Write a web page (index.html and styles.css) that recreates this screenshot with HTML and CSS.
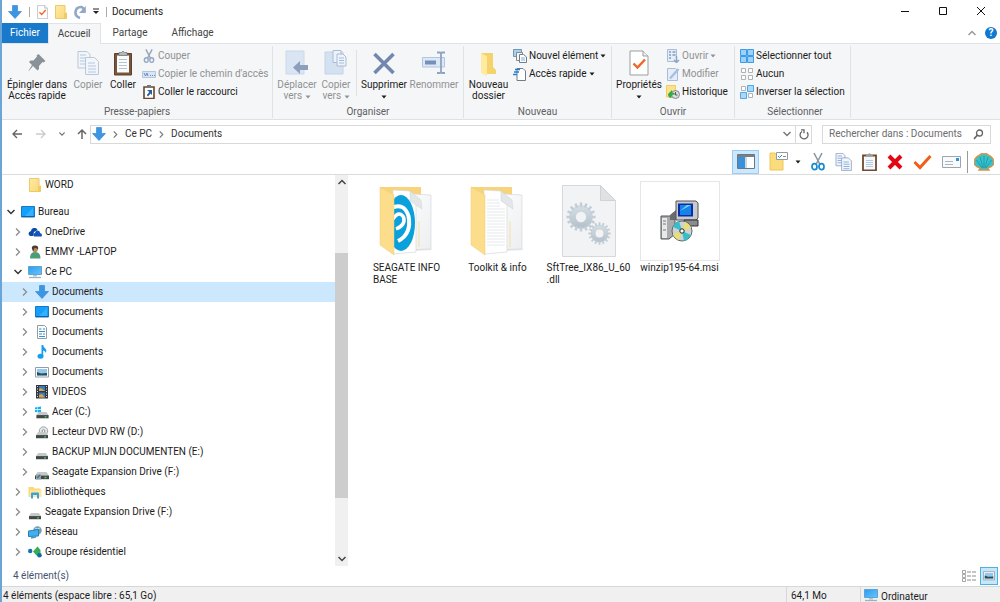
FILE: index.html
```html
<!DOCTYPE html>
<html lang="fr">
<head>
    <meta charset="utf-8">
    <title>Documents</title>
    <link rel="stylesheet" href="styles.css">
</head>
<body>
    <svg class="sprite" aria-hidden="true">
        <defs>
            <linearGradient id="screenFill" x1="0" y1="0" x2="1" y2="1"><stop offset="0" stop-color="#2b9df0"/><stop offset="1" stop-color="#69c4fb"/></linearGradient>
            <linearGradient id="folderFill" x1="0" y1="0" x2="1" y2="1"><stop offset="0" stop-color="#ffe9a6"/><stop offset="1" stop-color="#f8d775"/></linearGradient>
            <linearGradient id="pageFill" x1="0" y1="0" x2="1" y2="1"><stop offset="0" stop-color="#ffffff"/><stop offset="1" stop-color="#eceef0"/></linearGradient>
            <linearGradient id="gearFill" x1="0" y1="0" x2="0" y2="1"><stop offset="0" stop-color="#d0dae1"/><stop offset="1" stop-color="#b8c4cd"/></linearGradient>
        </defs>
        <symbol id="arrow-down" viewBox="0 0 14 14"><path d="M4.500 .5h5v6h4L7 13.500.5 6.500h4z" fill="#3b96e4" stroke="#2b80cc" stroke-width=".6"/></symbol>
        <symbol id="chev-right" viewBox="0 0 8 8"><path d="M2 0.500L5.500 4 2 7.500" fill="none" stroke="currentColor" stroke-width="1.300"/></symbol>
        <symbol id="chev-down" viewBox="0 0 8 8"><path d="M.5 2L4 5.500 7.500 2" fill="none" stroke="currentColor" stroke-width="1.500"/></symbol>
        <symbol id="chev-up" viewBox="0 0 8 8"><path d="M.5 6L4 2.500 7.500 6" fill="none" stroke="currentColor" stroke-width="1.500"/></symbol>
        <symbol id="caret" viewBox="0 0 6 4"><path d="M.5 .5h5L3 3.500z" fill="currentColor"/></symbol>
        <symbol id="folder" viewBox="0 0 12 14"><path d="M.5 .5h9.500v8l1.500-.5v5.500H.5z" fill="url(#folderFill)" stroke="#edca63"/><path d="M10 8.500v4.500" stroke="#e8bd45"/></symbol>
        <symbol id="desktop" viewBox="0 0 14 12"><path d="M.5.5h13v10.500H.5z" fill="#12a0fb" stroke="#1878c4"/><path d="M4 10L12 2v8z" fill="#35b1ff"/><path d="M1 10.500h12" stroke="#155f9d"/></symbol>
        <symbol id="computer" viewBox="0 0 14 13"><path d="M.5.5h13v8H.5z" fill="url(#screenFill)" stroke="#5da4d2"/><path d="M5 9h4v1.500H5z" fill="#aac6d8"/><path d="M1 11.500h12" stroke="#9fb1bd" stroke-width="1.300"/></symbol>
        <symbol id="clipboard" viewBox="0 0 18 25"><path d="M.5 3h17v21.500H.5z" fill="#7b5539" stroke="#5e4230"/><path d="M3 5h12v17H3z" fill="#f9fbfc"/><path d="M5 9h8M5 12h8M5 15h8M5 18h8" stroke="#b5c6d2"/><path d="M5 5V2h2.500Q9-.8 10.500 2H13v3z" fill="#b5b8ba" stroke="#777" stroke-width=".7"/></symbol>
        <symbol id="pages" viewBox="0 0 22 24"><g fill="#f3f7fc" stroke="#8099bd"><path d="M1 .5h9l3 3V17H1z"/><path d="M8.500 6.500h9l4 4v13h-13z"/></g><path d="M3 4h6M3 7h5M3 10h5M3 13h5M11 12h7M11 15h8M11 18h8M11 21h8" stroke="#6f9bd3"/></symbol>
        <symbol id="scissors" viewBox="0 0 14 18"><path d="M3 .5l6 11.500M11 .5L5 12" stroke="#8d969e" stroke-width="1.600"/><ellipse cx="3.500" cy="14.200" rx="2.500" ry="3" fill="none" stroke="#168bd2" stroke-width="1.700"/><ellipse cx="10.500" cy="14.200" rx="2.500" ry="3" fill="none" stroke="#168bd2" stroke-width="1.700"/></symbol>
        <symbol id="scissors-gray" viewBox="0 0 14 18"><path d="M3 .5l6 11.500M11 .5L5 12" stroke="#9aa5b5" stroke-width="1.800"/><ellipse cx="3.500" cy="14.200" rx="2.500" ry="3" fill="none" stroke="#94a8c6" stroke-width="1.800"/><ellipse cx="10.500" cy="14.200" rx="2.500" ry="3" fill="none" stroke="#94a8c6" stroke-width="1.800"/></symbol>
        <symbol id="drive" viewBox="0 0 14 8"><path d="M2.500 0h9L14 3.500H0z" fill="#c6c9cb"/><path d="M0 3.500h14v3.700H0z" fill="#444748"/><path d="M9.500 5.500h2" stroke="#43d851" stroke-width="1.500"/></symbol>
        <symbol id="picture" viewBox="0 0 14 11"><path d="M.5.5h13v9.500H.5z" fill="#fff" stroke="#929da6"/><path d="M2 2h10v6.500H2z" fill="#93c9ec"/><path d="M2 8.500V5l4 1.500L12 6v2.500z" fill="#274e61"/></symbol>
        <symbol id="check-page" viewBox="0 0 20 25"><path d="M1 .5h13l5 5v19H1z" fill="#fff" stroke="#9b9d9f"/><path d="M14 .5v5h5" fill="#eceeef" stroke="#9b9d9f"/><path d="M4.500 13l4 4L16 9" fill="none" stroke="#f26522" stroke-width="2.400"/></symbol>
        <symbol id="gear" viewBox="-16 -16 32 32"><circle r="9" fill="none" stroke="url(#gearFill)" stroke-width="7"/><path d="M0-11V-15.500M0 11V15.500M-11 0H-15.500M11 0H15.500M-7.800-7.800L-11-11M7.800 7.800L11 11M-7.800 7.800L-11 11M7.800-7.800L11-11M4.200-10.200L5.900-14.300M-4.200 10.200L-5.900 14.300M-4.200-10.200L-5.900-14.300M4.200 10.200L5.900 14.300M10.200-4.200L14.300-5.900M-10.200 4.200L-14.300 5.900M10.200 4.200L14.300 5.900M-10.200-4.200L-14.300-5.900" stroke="#c2cdd5" stroke-width="2.600"/></symbol>
        <symbol id="open-folder" viewBox="0 0 56 70"><path d="M10 66l44-2-8-3-20 2z" fill="#e6e7e8"/><path d="M1 1h41v60L15 66z" fill="#f7d479"/><path d="M18 7l34 2v54l-30 1z" fill="url(#pageFill)" stroke="#d5d8da" stroke-width=".7"/><path d="M40 35v26" stroke="#f5dfa0"/><path d="M14 4l17 1 6 10v51l-23 2z" fill="#fff" stroke="#d5d8da" stroke-width=".7"/><path d="M31 5v10l12 8-1-9z" fill="#e4e7e9" stroke="#d0d3d5" stroke-width=".5"/></symbol>
    </svg>

    <header class="titlebar">
        <div class="quick-access">
            <svg width="14" height="14"><use href="#arrow-down"/></svg>
            <span class="sep"></span>
            <button aria-label="Propriétés"><svg width="11" height="14"><use href="#check-page"/></svg></button>
            <button aria-label="Nouveau dossier"><svg width="12" height="14"><use href="#folder"/></svg></button>
            <button aria-label="Rétablir"><svg width="12" height="14" viewBox="0 0 12 14"><path d="M6 13Q1 11.500 1.500 7 2 2 7 2q2 0 2.500 2.500" fill="none" stroke="#93a8c5" stroke-width="2.600"/><path d="M11.800 1v7H5z" fill="#93a8c5"/></svg></button>
            <button aria-label="Personnaliser"><svg width="6" height="7" viewBox="0 0 6 7"><path d="M0 1h6" stroke="#222"/><path d="M0 3h6L3 6z" fill="#222"/></svg></button>
            <span class="sep"></span>
            <h1>Documents</h1>
        </div>
        <div class="window-buttons">
            <button aria-label="Réduire"><svg width="10" height="10"><path d="M1 5.500h8" stroke="#111"/></svg></button>
            <button aria-label="Agrandir"><svg width="10" height="10"><path d="M1.500 1.500h7v7h-7z" fill="none" stroke="#111"/></svg></button>
            <button aria-label="Fermer"><svg width="10" height="10"><path d="M1 1l8 8M9 1L1 9" stroke="#111"/></svg></button>
        </div>
    </header>

    <nav class="tabs">
        <button class="tab tab-file">Fichier</button>
        <button class="tab tab-active">Accueil</button>
        <button class="tab">Partage</button>
        <button class="tab">Affichage</button>
        <div class="tabs-end">
            <button aria-label="Réduire le ruban"><svg width="8" height="8" class="faint"><use href="#chev-up"/></svg></button>
            <button class="help" aria-label="Aide">?</button>
        </div>
    </nav>

    <section class="ribbon">
        <div class="group g-clip">
            <div class="tools">
                <button class="big w-pin"><svg width="18" height="26" viewBox="0 0 18 26"><path d="M10.500 4l7 7-2 1.500-1-.5-3.500 4v3l-1.500 1.500L5 16 .8 21l-.3-.3L4 15 1 12l1.500-1.500h3l3.500-4-.5-1z" fill="#8a9299"/></svg><span>Épingler dans<br>Accès rapide</span></button>
                <button class="big w-copy" disabled><svg width="22" height="26" class="pale"><use href="#pages"/></svg><span>Copier</span></button>
                <button class="big w-paste"><svg width="18" height="26"><use href="#clipboard"/></svg><span>Coller</span></button>
                <div class="small-tools">
                    <button disabled><svg width="14" height="14"><use href="#scissors-gray"/></svg>Couper</button>
                    <button disabled><svg width="14" height="14" viewBox="0 0 14 14"><path d="M.5 4.500h13v6H.5z" fill="#d9e5f4" stroke="#b3c5df"/><path d="M2 6l1.500 3L5 6l1 3M8 8.500h1M10 8.500h1M12 8.500h1" fill="none" stroke="#6e8cb5"/></svg>Copier le chemin d'accès</button>
                    <button><svg width="14" height="14" viewBox="0 0 14 14"><path d="M2 2h10v11.500H2z" fill="#fff" stroke="#68482f" stroke-width="1.600"/><path d="M5 0h4v3H5z" fill="#777"/><path d="M5 5h5v5L8.500 8.500 6 11.500 4.800 10l2.500-3z" fill="#275fa5"/></svg>Coller le raccourci</button>
                </div>
            </div>
            <h2>Presse-papiers</h2>
        </div>
        <div class="group g-org">
            <div class="tools">
                <button class="big w-org" disabled><svg width="24" height="26" viewBox="0 0 24 26"><path d="M1 1h18v23H1z" fill="#d9e5f3" stroke="#cad8ea"/><path d="M15 11v4h8v5h-8v4l-7-6.500z" fill="#8d9fbd"/></svg><span>Déplacer<br>vers <svg width="6" height="4"><use href="#caret"/></svg></span></button>
                <button class="big w-org2" disabled><svg width="24" height="26" viewBox="0 0 24 26"><path d="M1 2h18v22H1z" fill="#d4e1f1" stroke="#c3d3e8"/><g fill="#edf3fa" stroke="#a9bcd7"><path d="M9 .5h8v12H9z"/><path d="M13 4h6l3 3v9h-9z"/></g><path d="M15 8h5M15 10.500h5M15 13h5" stroke="#a9bcd7"/></svg><span>Copier<br>vers <svg width="6" height="4"><use href="#caret"/></svg></span></button>
                <span class="tool-sep"></span>
                <button class="big w-del"><svg width="22" height="26" viewBox="0 0 22 26"><path d="M1.500 4l19 19M20.500 4l-19 19" stroke="#7287ad" stroke-width="3.600"/></svg><span>Supprimer<br><svg width="6" height="4"><use href="#caret"/></svg></span></button>
                <button class="big w-ren" disabled><svg width="24" height="26" viewBox="0 0 24 26"><path d="M.5 7.500h22v9.500H.5z" fill="#dce8f6" stroke="#b1c5e0"/><path d="M3 10.500h11v4H3z" fill="#7590b9"/><path d="M15 2.500h3l1 1 1-1h3M15 23h3l1-1 1 1h3M19 3v19" fill="none" stroke="#8fa3c2" stroke-width="1.800"/></svg><span>Renommer</span></button>
            </div>
            <h2>Organiser</h2>
        </div>
        <div class="group g-new">
            <div class="tools">
                <button class="big w-new"><svg width="18" height="26" viewBox="0 0 18 26"><path d="M1 3h12v14l3 3v4H3z" fill="#f5d36c"/><path d="M1 3l6 3.500V26L1 23z" fill="#ffeaa0"/></svg><span>Nouveau<br>dossier</span></button>
                <div class="small-tools">
                    <button><svg width="14" height="14" viewBox="0 0 14 14"><path d="M.5.5h8v7h-8z" fill="#a5d2f2" stroke="#7895ac"/><path d="M3.500 3.500h6v8h-6z" fill="#f3f5f6" stroke="#888"/><path d="M6.500 5.500h4l3 2.500v5.500h-7z" fill="#fff" stroke="#737d85"/><path d="M8 9h4M8 11h4" stroke="#78aee1"/></svg>Nouvel élément <svg width="6" height="4"><use href="#caret"/></svg></button>
                    <button><svg width="14" height="14" viewBox="0 0 14 14"><path d="M4 1.500h6l2.500 2.500v9.500H4z" fill="#fff" stroke="#737d85"/><path d="M2 2.500h5M1 5h5M0 7.500h4" stroke="#2680ce" stroke-width="1.300"/></svg>Accès rapide <svg width="6" height="4"><use href="#caret"/></svg></button>
                </div>
            </div>
            <h2>Nouveau</h2>
        </div>
        <div class="group g-open">
            <div class="tools">
                <button class="big w-prop"><svg width="20" height="26"><use href="#check-page"/></svg><span>Propriétés<br><svg width="6" height="4"><use href="#caret"/></svg></span></button>
                <div class="small-tools">
                    <button disabled><svg width="14" height="14" viewBox="0 0 14 14"><path d="M1.500.5h9v12h-9z" fill="#e4edf8" stroke="#a9bdd8"/><path d="M3 3h2M3 6h2M3 9h2M6.500 3h3M6.500 6h3" stroke="#7f9dc6" stroke-width="1.500"/><path d="M10.500 7v6M8 11l2.500 2.500L13 11" fill="none" stroke="#8ba6ca" stroke-width="1.500"/></svg>Ouvrir <svg width="6" height="4"><use href="#caret"/></svg></button>
                    <button disabled><svg width="14" height="14" viewBox="0 0 14 14"><path d="M1.500 1.500h8l2 2v10h-10z" fill="#e4edf8" stroke="#a9bdd8"/><path d="M4 11.500L12.500 2" stroke="#a8c0e0" stroke-width="2.500"/></svg>Modifier</button>
                    <button><svg width="14" height="14" viewBox="0 0 14 14"><path d="M.5.5h9V12h-9z" fill="#fde28c" stroke="#efcc64"/><circle cx="9.500" cy="9.500" r="4" fill="#d9dedf" stroke="#82898c"/><path d="M9.500 7v3h2" fill="none" stroke="#555"/><path d="M2 9l4-4v2.500q3 0 3 2Q5 9 5.500 13 2 13 2 9z" fill="#35ab45"/></svg>Historique</button>
                </div>
            </div>
            <h2>Ouvrir</h2>
        </div>
        <div class="group g-select">
            <div class="tools">
                <div class="small-tools">
                    <button><svg width="14" height="14" viewBox="0 0 14 14"><path d="M.5.5h6v6h-6zM7.500 .5h6v6h-6zM.5 7.500h6v6h-6zM7.500 7.500h6v6h-6z" fill="#9bd1fa" stroke="#3c9be4"/></svg>Sélectionner tout</button>
                    <button><svg width="14" height="14" viewBox="0 0 14 14"><path d="M1.500 1.500h4v4h-4zM8.500 1.500h4v4h-4zM1.500 8.500h4v4h-4zM8.500 8.500h4v4h-4z" fill="#fff" stroke="#adb2b5"/></svg>Aucun</button>
                    <button><svg width="14" height="14" viewBox="0 0 14 14"><path d="M1.500 1.500h4v4h-4zM8.500 8.500h4v4h-4z" fill="#fff" stroke="#adb2b5"/><path d="M7.500 .5h6v6h-6zM.5 7.500h6v6h-6z" fill="#a9d8fb" stroke="#55a7e4"/></svg>Inverser la sélection</button>
                </div>
            </div>
            <h2>Sélectionner</h2>
        </div>
    </section>

    <div class="address-row">
        <div class="nav-buttons">
            <button aria-label="Précédent"><svg width="12" height="12"><path d="M11 6H2M6 2L2 6l4 4" fill="none" stroke="#666" stroke-width="1.400"/></svg></button>
            <button aria-label="Suivant" disabled><svg width="12" height="12"><path d="M1 6h9M6 2l4 4-4 4" fill="none" stroke="#ccc" stroke-width="1.400"/></svg></button>
            <button aria-label="Emplacements récents"><svg width="6" height="6"><use href="#chev-down"/></svg></button>
            <button aria-label="Dossier parent"><svg width="10" height="12"><path d="M5 11V2M1 6l4-4 4 4" fill="none" stroke="#666" stroke-width="1.500"/></svg></button>
        </div>
        <div class="address">
            <svg width="14" height="14"><use href="#arrow-down"/></svg>
            <svg width="7" height="7"><use href="#chev-right"/></svg>
            <a href="#">Ce PC</a>
            <svg width="7" height="7"><use href="#chev-right"/></svg>
            <a href="#">Documents</a>
            <button class="history" aria-label="Historique"><svg width="8" height="8"><use href="#chev-down"/></svg></button>
            <button class="refresh" aria-label="Actualiser"><svg width="10" height="11" viewBox="0 0 10 11"><path d="M3 2.500a4 4 0 1 0 5 .7M2 .8h3v3.500" fill="none" stroke="#666" stroke-width="1.300"/></svg></button>
        </div>
        <form class="search">
            <input type="text" aria-label="Rechercher" placeholder="Rechercher dans : Documents">
            <svg width="11" height="11"><circle cx="6.500" cy="4" r="3" fill="none" stroke="#666" stroke-width="1.300"/><path d="M4.500 6L1 9.800" stroke="#666" stroke-width="1.700"/></svg>
        </form>
    </div>

    <div class="toolbar">
        <button class="pane-toggle" aria-label="Volet de navigation"><svg width="18" height="15" viewBox="0 0 18 15"><path d="M.5.5h17v14H.5z" fill="#fff" stroke="#6d777e"/><path d="M1 1h16v2H1z" fill="#788085"/><path d="M1 3h7v11H1z" fill="#3692dd"/><path d="M9 3v11" stroke="#a4adb3"/></svg></button>
        <button class="organize" aria-label="Organiser"><svg width="19" height="19" viewBox="0 0 19 19"><path d="M1 1h5l2 2h6v15H1z" fill="#fbdc7d" stroke="#edc65b"/><path d="M7.500.5h11v7h-11z" fill="#fff" stroke="#929ba1"/><path d="M9 4l1.500 1.500L13 3" fill="none" stroke="#2181ce"/><path d="M14 4.500h3" stroke="#888"/></svg><svg width="6" height="4"><use href="#caret"/></svg></button>
        <button aria-label="Couper"><svg width="14" height="19"><use href="#scissors"/></svg></button>
        <button aria-label="Copier"><svg width="17" height="18"><use href="#pages"/></svg></button>
        <button aria-label="Coller"><svg width="15" height="18" viewBox="0 0 15 18"><path d="M1 2.500h13v15H1z" fill="#fff" stroke="#70492f" stroke-width="1.800"/><path d="M2.500 4h10v12h-10z" fill="#f4f8fb"/><path d="M4 7.500h7M4 9.500h7M4 11.500h7M4 13.500h7" stroke="#b0cbe2"/><path d="M4 3.500V1.500h2Q7.500-1 9 1.500h2v2z" fill="#9b9da0"/></svg></button>
        <button aria-label="Supprimer"><svg width="16" height="16"><path d="M2 2l12 12M14 2L2 14" stroke="#e30613" stroke-width="4"/></svg></button>
        <button aria-label="Propriétés"><svg width="19" height="16"><path d="M1.500 8l5.500 5.500L17.500 2" fill="none" stroke="#f45d19" stroke-width="3"/></svg></button>
        <button aria-label="Envoyer"><svg width="19" height="12"><path d="M.5.5h18v11H.5z" fill="#f8fafb" stroke="#9da5aa"/><path d="M3 5.500h8M3 8.500h8" stroke="#aeb7bd"/><path d="M14 2h3v3h-3z" fill="#2793e1"/></svg></button>
        <span class="toolbar-sep"></span>
        <button class="shell" aria-label="Classic Shell"><svg width="20" height="18" viewBox="0 0 20 18"><path d="M6 15Q-2 13 1 6 3 3 5 2.500 7.500-.2 10 1q2.500-1.200 5 1.500 2 .5 4 3.500 3 7-5 9l1 2H5z" fill="#35c3cc" stroke="#e08f45" stroke-width="1.400"/><path d="M10 15V3M9 15L6 4M8 15L2.500 7M11 15l3-11M12 15l5.500-8" stroke="#1a93a5" stroke-width=".8" fill="none"/></svg></button>
    </div>

    <main class="content">
        <nav class="tree">
            <ul>
                <li class="lvl1 tree-first"><span class="twist"></span><span class="ico"><svg width="12" height="14"><use href="#folder"/></svg></span><a href="#">WORD</a></li>
                <li class="lvl0 open"><svg class="twist"><use href="#chev-down"/></svg><span class="ico"><svg width="14" height="12"><use href="#desktop"/></svg></span><a href="#">Bureau</a></li>
                <li class="lvl1"><svg class="twist"><use href="#chev-right"/></svg><span class="ico"><svg width="14" height="10" viewBox="0 0 14 10"><path d="M1 8Q-.5 5 3 4 3.500.5 7 1q2 .2 2.500 2L6 5 5 9H2z" fill="#0b4ba8"/><path d="M6 9.500Q4 6.500 7 6q1-3.500 4-2 1 .5 1 2 3 .8 1.500 3.500z" fill="#1554b8"/></svg></span><a href="#">OneDrive</a></li>
                <li class="lvl1"><svg class="twist"><use href="#chev-right"/></svg><span class="ico"><svg width="12" height="14" viewBox="0 0 12 14"><path d="M1 13.500Q1 7 6 7q5.500 0 5.500 6.500z" fill="#4b9d79"/><circle cx="6" cy="4.500" r="2.800" fill="#b98963"/><path d="M3 4Q2 .5 6 .5q4 0 3 4Q7 2 5 3.500V6z" fill="#4b3c34"/></svg></span><a href="#">EMMY -LAPTOP</a></li>
                <li class="lvl1 open"><svg class="twist"><use href="#chev-down"/></svg><span class="ico"><svg width="14" height="13"><use href="#computer"/></svg></span><a href="#">Ce PC</a></li>
                <li class="lvl2 selected"><svg class="twist"><use href="#chev-right"/></svg><span class="ico"><svg width="14" height="14"><use href="#arrow-down"/></svg></span><a href="#">Documents</a></li>
                <li class="lvl2"><svg class="twist"><use href="#chev-right"/></svg><span class="ico"><svg width="14" height="12"><use href="#desktop"/></svg></span><a href="#">Documents</a></li>
                <li class="lvl2"><svg class="twist"><use href="#chev-right"/></svg><span class="ico"><svg width="12" height="14" viewBox="0 0 12 14"><path d="M1.500.5h7l2 2v11h-9z" fill="#fff" stroke="#929ca3"/><path d="M3 4h2.500M3 6.500h6M3 9h3M7 4h2M7 9h2M3 11.500h6" stroke="#368fcf"/></svg></span><a href="#">Documents</a></li>
                <li class="lvl2"><svg class="twist"><use href="#chev-right"/></svg><span class="ico"><svg width="12" height="14" viewBox="0 0 12 14"><ellipse cx="4.500" cy="11.200" rx="3" ry="2.500" fill="#159df0"/><path d="M5.500 0h1.700q.2 2.500 2.500 4 1.300 1 .2 4-.3-2-2.700-2.500V11H5.500z" fill="#159df0"/></svg></span><a href="#">Documents</a></li>
                <li class="lvl2"><svg class="twist"><use href="#chev-right"/></svg><span class="ico"><svg width="14" height="11"><use href="#picture"/></svg></span><a href="#">Documents</a></li>
                <li class="lvl2"><svg class="twist"><use href="#chev-right"/></svg><span class="ico"><svg width="12" height="14" viewBox="0 0 12 14"><path d="M0 0h12v13.500H0z" fill="#34383c"/><path d="M3 1h6v5H3zM3 7.500h6v5H3z" fill="#3979c1"/><path d="M3 4l2-1 4 3H3zM3 10l3-1 3 3.500H3z" fill="#d7a44b"/><path d="M1.500 1v12M10.500 1v12" stroke="#d8dbdd" stroke-dasharray="1 1.500"/></svg></span><a href="#">VIDEOS</a></li>
                <li class="lvl2"><svg class="twist"><use href="#chev-right"/></svg><span class="ico"><svg width="14" height="13" viewBox="0 0 14 13"><path d="M0 1.500L2.500 1v2.300H0zM3 1l3-.5v2.800H3zM0 4h2.500v2.300L0 6zM3 4h3v3l-3-.5z" fill="#16b2ee"/><svg x="1" y="6" width="13" height="7"><use href="#drive"/></svg></svg></span><a href="#">Acer (C:)</a></li>
                <li class="lvl2"><svg class="twist"><use href="#chev-right"/></svg><span class="ico"><svg width="14" height="13" viewBox="0 0 14 13"><circle cx="8.500" cy="5" r="4.200" fill="#e5e8e9" stroke="#9ea4a8"/><circle cx="8.500" cy="5" r="1.400" fill="#fff" stroke="#8d9397"/><svg x="1" y="6" width="12" height="7"><use href="#drive"/></svg></svg></span><a href="#">Lecteur DVD RW (D:)</a></li>
                <li class="lvl2"><svg class="twist"><use href="#chev-right"/></svg><span class="ico low"><svg width="12" height="7"><use href="#drive"/></svg></span><a href="#">BACKUP MIJN DOCUMENTEN (E:)</a></li>
                <li class="lvl2"><svg class="twist"><use href="#chev-right"/></svg><span class="ico low"><svg width="14" height="8" viewBox="0 0 14 8"><use href="#drive" width="14" height="8"/><path d="M1 2.500h5v5H1z" fill="#9ba2a6"/><path d="M2 6l3-3" stroke="#3877a9" stroke-width="1.500"/></svg></span><a href="#">Seagate Expansion Drive (F:)</a></li>
                <li class="lvl1"><svg class="twist"><use href="#chev-right"/></svg><span class="ico"><svg width="14" height="13" viewBox="0 0 14 13"><path d="M.5 1h5l1 1.500h6V11H.5z" fill="#fbd974"/><path d="M2 4h11.500v7H2z" fill="#ffe79b"/><path d="M3 12.500V7.500q0-1 1-1h6q1 0 1 1v5H9V9H5v3.500z" fill="#38a4df"/></svg></span><a href="#">Bibliothèques</a></li>
                <li class="lvl1"><svg class="twist"><use href="#chev-right"/></svg><span class="ico low"><svg width="12" height="7"><use href="#drive"/></svg></span><a href="#">Seagate Expansion Drive (F:)</a></li>
                <li class="lvl1"><svg class="twist"><use href="#chev-right"/></svg><span class="ico"><svg width="14" height="13" viewBox="0 0 14 13"><circle cx="9.500" cy="4.500" r="4.200" fill="#6e9eba"/><path d="M7 2q2 2 5 0" fill="none" stroke="#c8e0ec"/><path d="M.5 5l10-1.500v6.500l-10 .5z" fill="#43b0ed" stroke="#257fbd"/><path d="M3 12l5-1" stroke="#5295bd" stroke-width="1.500"/></svg></span><a href="#">Réseau</a></li>
                <li class="lvl1"><svg class="twist"><use href="#chev-right"/></svg><span class="ico"><svg width="14" height="12" viewBox="0 0 14 12"><circle cx="2.200" cy="5" r="2.200" fill="#176dbd"/><path d="M5 5.500L9.500.5l3 3.500v5l-4 .5z" fill="#35ae54"/><circle cx="11.500" cy="9.300" r="2.300" fill="#1765ae"/></svg></span><a href="#">Groupe résidentiel</a></li>
            </ul>
            <div class="scrollbar">
                <button aria-label="Défiler vers le haut"><svg width="8" height="8"><use href="#chev-up"/></svg></button>
                <div class="track"><div class="thumb"></div></div>
                <button aria-label="Défiler vers le bas"><svg width="8" height="8"><use href="#chev-down"/></svg></button>
            </div>
        </nav>

        <div class="files">
            <a class="file" href="#">
                <span class="thumbnail"><svg width="56" height="70" viewBox="0 0 56 70"><use href="#open-folder" width="56" height="70"/><ellipse cx="22" cy="37" rx="14" ry="28" fill="#0aa0dc"/><path d="M12 22Q25 16 29.500 30 33 48 19 55" fill="none" stroke="#fff" stroke-width="4"/><path d="M14 33Q20 24 24.500 31 27 39 17 43" fill="none" stroke="#fff" stroke-width="3.500"/><path d="M1 1l14 8v60L1 59z" fill="#fbdd8b" stroke="#f0cd74" stroke-width=".5"/></svg></span>
                <span class="name">SEAGATE INFO<br>BASE</span>
            </a>
            <a class="file" href="#">
                <span class="thumbnail"><svg width="56" height="70" viewBox="0 0 56 70"><use href="#open-folder" width="56" height="70"/><path d="M17 14h12M17 17h13M17 20h13M17 23h18M17 26h18M17 29h18M17 32h18M17 35h18M17 38h18M17 41h18M17 44h18M17 47h18M17 50h18M17 53h18M17 56h18M17 59h18" stroke="#e5e8eb"/><path d="M1 1l14 8v60L1 59z" fill="#fbdd8b" stroke="#f0cd74" stroke-width=".5"/></svg></span>
                <span class="name">Toolkit &amp; info</span>
            </a>
            <a class="file" href="#">
                <span class="thumbnail"><svg width="54" height="72" viewBox="0 0 54 72"><path d="M.5.5h38l15 15v56H.5z" fill="#f2f3f4" stroke="#d6d8da"/><path d="M38.500.5v15h15z" fill="#dfe1e3" stroke="#d0d2d4"/><use href="#gear" x="4" y="17" width="30" height="30"/><use href="#gear" x="26" y="37" width="23" height="23"/></svg></span>
                <span class="name">SftTree_IX86_U_60<br>.dll</span>
            </a>
            <a class="file" href="#">
                <span class="thumbnail framed"><svg width="40" height="42" viewBox="0 0 40 42"><path d="M1 16h9l5-4v22l-6 5H1z" fill="#a9abad" stroke="#555"/><path d="M2 18h5v20H2z" fill="#e8e9ea"/><path d="M3 21h3M3 24h3M3 30h3" stroke="#777"/><path d="M10 15l6-5v10h-6z" fill="#696c6f"/><path d="M16 1h20l2 2v15l-2 2H16z" fill="#c8cbcd" stroke="#555"/><path d="M18 3.500h15v13H18z" fill="#0d2ca5"/><path d="M20 5h11v10H20z" fill="#1684e7"/><path d="M20 11l7-6h4z" fill="#71d5fa"/><path d="M24 20h14v6H26z" fill="#898c8f" stroke="#333"/><circle cx="22" cy="31" r="10" fill="#cdd2d4" stroke="#636668"/><path d="M22 31L13 27q2-5 6-6zM22 31l9 4q-3 5-7 6z" fill="#38bec8"/><path d="M22 31l3-9q5 2 6 6zM22 31l-3 9q-5-2-6-6z" fill="#e8df78"/><circle cx="22" cy="31" r="2.200" fill="#fff" stroke="#222"/></svg></span>
                <span class="name">winzip195-64.msi</span>
            </a>
        </div>
    </main>

    <div class="details-bar">
        <span>4 élément(s)</span>
        <div class="views">
            <button aria-label="Détails"><svg width="14" height="12" viewBox="0 0 14 12"><path d="M.5.5h3v3h-3zM.5 4.500h3v3h-3zM.5 8.500h3v3h-3z" fill="none" stroke="#a5a5a5"/><path d="M5 2h4M10 2h4M5 6h4M10 6h4M5 10h4M10 10h4" stroke="#8c8c8c"/></svg></button>
            <button class="view-active" aria-label="Grandes icônes"><svg width="12" height="10"><use href="#picture"/></svg></button>
        </div>
    </div>

    <footer class="statusbar">
        <span class="status-main">4 éléments (espace libre : 65,1 Go)</span>
        <span class="status-size">64,1 Mo</span>
        <span class="status-zone"><svg width="14" height="13"><use href="#computer"/></svg>Ordinateur</span>
    </footer>
</body>
</html>
```
FILE: styles.css
```css
* {
    box-sizing: border-box;
}
body {
    margin: 0;
    height: 100vh;
    display: flex;
    flex-direction: column;
    overflow: hidden;
    border-left: 2px solid #6aa5d6;
    background: #fff;
    color: #1b1b1b;
    font: 10px/12px Roboto, "Open Sans", sans-serif;
}
button {
    display: flex;
    align-items: center;
    justify-content: center;
    padding: 0;
    border: 0;
    background: none;
    color: inherit;
    font: inherit;
    white-space: nowrap;
}
button:disabled {
    color: #8f9194;
}
a {
    color: inherit;
    text-decoration: none;
    white-space: nowrap;
}
h1, h2 {
    margin: 0;
    font-size: inherit;
    font-weight: normal;
}
svg {
    flex-shrink: 0;
}
.sprite {
    position: absolute;
    width: 0;
    height: 0;
}
.pale {
    opacity: 0.5;
}
.faint {
    color: #999;
}

/* title bar */
.titlebar {
    display: flex;
    justify-content: space-between;
    height: 23px;
    flex-shrink: 0;
}
.quick-access {
    display: flex;
    align-items: center;
    gap: 7px;
    padding-left: 6px;
}
.quick-access h1 {
    margin-left: -2px;
}
.sep {
    width: 1px;
    height: 10px;
    background: #aaa;
}
.window-buttons {
    display: flex;
}
.window-buttons button {
    width: 38px;
    height: 21px;
}

/* tabs */
.tabs {
    display: flex;
    height: 20px;
    flex-shrink: 0;
}
.tab {
    padding: 0 12px;
    color: #444;
}
.tab-file {
    padding: 0 8px;
    background: #1979ca;
    color: #fff;
}
.tab-active {
    margin-bottom: -1px;
    padding: 0 9px;
    border: 1px solid #e2e3e4;
    border-bottom: 0;
    background: #f5f6f7;
    z-index: 1;
}
.tabs-end {
    display: flex;
    align-items: center;
    gap: 9px;
    margin-left: auto;
    padding-right: 3px;
}
.help {
    width: 12px;
    height: 12px;
    border-radius: 50%;
    background: #0f78d0;
    color: #fff;
    font-weight: bold;
}

/* ribbon */
.ribbon {
    display: flex;
    height: 77px;
    flex-shrink: 0;
    padding: 2px 0 1px;
    border-top: 1px solid #e2e3e4;
    border-bottom: 1px solid #dfe0e1;
    background: #f5f6f7;
}
.group {
    display: flex;
    flex-direction: column;
    justify-content: space-between;
    border-right: 1px solid #e0e2e3;
}
.group h2 {
    text-align: center;
    color: #5e6062;
}
.tools {
    display: flex;
    padding-top: 1px;
}
.g-clip {
    width: 271px;
}
.g-org {
    width: 191px;
}
.g-new {
    width: 148px;
}
.g-open {
    width: 123px;
}
.g-select {
    width: 116px;
    padding-left: 5px;
}
.big {
    flex-direction: column;
    justify-content: flex-start;
    padding-top: 3px;
    line-height: 11px;
}
.big > svg {
    margin-bottom: 3px;
}
.w-pin {
    width: 70px;
}
.w-copy {
    width: 32px;
}
.w-paste {
    width: 38px;
}
.w-org {
    width: 48px;
}
.w-org2 {
    width: 30px;
}
.w-del {
    width: 52px;
}
.w-ren {
    width: 48px;
}
.w-new {
    width: 49px;
}
.w-prop {
    width: 54px;
}
.tool-sep {
    width: 1px;
    height: 46px;
    margin: 3px 1px 0 5px;
    background: #e0e2e3;
}
.small-tools {
    display: flex;
    flex-direction: column;
}
.small-tools button {
    justify-content: flex-start;
    gap: 2px;
    height: 18px;
}

/* address */
.address-row {
    display: flex;
    align-items: center;
    height: 28px;
    flex-shrink: 0;
    padding-right: 9px;
    color: #333;
}
.nav-buttons {
    display: flex;
    align-items: center;
    gap: 12px;
    width: 88px;
    padding-left: 9px;
    color: #777;
}
.address {
    display: flex;
    flex: 1;
    align-items: center;
    gap: 6px;
    height: 19px;
    padding-left: 1px;
    border: 1px solid #d9d9d9;
}
.address > svg + svg, .address a + svg {
    color: #777;
}
.history {
    margin-left: auto;
    color: #777;
}
.refresh {
    width: 16px;
    height: 17px;
    margin-left: -2px;
    border-left: 1px solid #d9d9d9;
}
.search {
    display: flex;
    align-items: center;
    width: 169px;
    height: 19px;
    margin-left: 10px;
    padding: 0 6px;
    border: 1px solid #d9d9d9;
}
.search input {
    flex: 1;
    min-width: 0;
    padding: 0;
    border: 0;
    outline: 0;
    font: inherit;
}
.search input::placeholder {
    color: #6d6d6d;
}

/* classic toolbar */
.toolbar {
    display: flex;
    align-items: center;
    justify-content: flex-end;
    gap: 10px;
    height: 27px;
    flex-shrink: 0;
    padding: 1px 6px 0 0;
    border-bottom: 1px solid #dcdcdc;
}
.pane-toggle {
    width: 27px;
    height: 24px;
    border: 1px solid #99cdf5;
    background: #cce8ff;
}
.organize {
    gap: 7px;
}
.toolbar-sep {
    width: 1px;
    height: 22px;
    margin: 0 -4px;
    background: #9a9a9a;
}

/* navigation pane and files */
.content {
    display: flex;
    flex: 1;
    min-height: 0;
}
.tree {
    display: flex;
    width: 346px;
}
.tree ul {
    flex: 1;
    margin: 0;
    padding: 0;
    list-style: none;
}
.tree li {
    display: flex;
    align-items: center;
    gap: 2px;
    height: 20px;
}
.tree .tree-first {
    margin-bottom: 7px;
}
.lvl0 {
    padding-left: 5px;
}
.lvl1 {
    padding-left: 12px;
}
.lvl2 {
    padding-left: 19px;
}
.selected {
    background: #cce8ff;
}
.twist {
    width: 8px;
    height: 8px;
    color: #8c8c8c;
}
.open .twist {
    color: #333;
}
.ico {
    display: flex;
    align-items: center;
    justify-content: center;
    width: 16px;
    height: 16px;
    margin-left: 3px;
}
.low {
    align-items: flex-end;
}
.scrollbar {
    display: flex;
    flex-direction: column;
    width: 13px;
    background: #f0f0f0;
    color: #444;
}
.scrollbar button {
    height: 14px;
}
.track {
    display: flex;
    flex: 1;
    flex-direction: column;
    padding: 64px 0 54px;
}
.thumb {
    flex: 1;
    background: #cdcdcd;
}
.files {
    display: flex;
    flex: 1;
    flex-wrap: wrap;
    align-content: flex-start;
    padding: 6px 0 0 13px;
}
.file {
    display: flex;
    flex-direction: column;
    align-items: center;
    width: 91px;
}
.thumbnail {
    display: flex;
    align-items: center;
    justify-content: center;
    width: 80px;
    height: 80px;
    border: 1px solid transparent;
}
.framed {
    border-color: #e6e6e6;
}
.name {
    margin-top: 1px;
}

/* bottom bars */
.details-bar {
    display: flex;
    align-items: center;
    justify-content: space-between;
    height: 20px;
    flex-shrink: 0;
    padding: 0 2px 0 11px;
    color: #44546f;
}
.views {
    display: flex;
    gap: 2px;
}
.views button {
    width: 18px;
    height: 18px;
}
.views .view-active {
    border: 1px solid #4fb0e2;
    background: #c5e7f7;
}
.statusbar {
    display: flex;
    height: 16px;
    flex-shrink: 0;
    padding-left: 1px;
    border-top: 1px solid #d7d7d7;
    background: #f0f0f0;
    line-height: 18px;
    overflow: hidden;
}
.status-main {
    flex: 1;
}
.status-size {
    width: 74px;
    padding-left: 4px;
    border-left: 1px solid #d7d7d7;
}
.status-zone {
    display: flex;
    gap: 3px;
    width: 140px;
    padding: 2px 0 0 3px;
    border-left: 1px solid #d7d7d7;
    line-height: 15px;
}
```
